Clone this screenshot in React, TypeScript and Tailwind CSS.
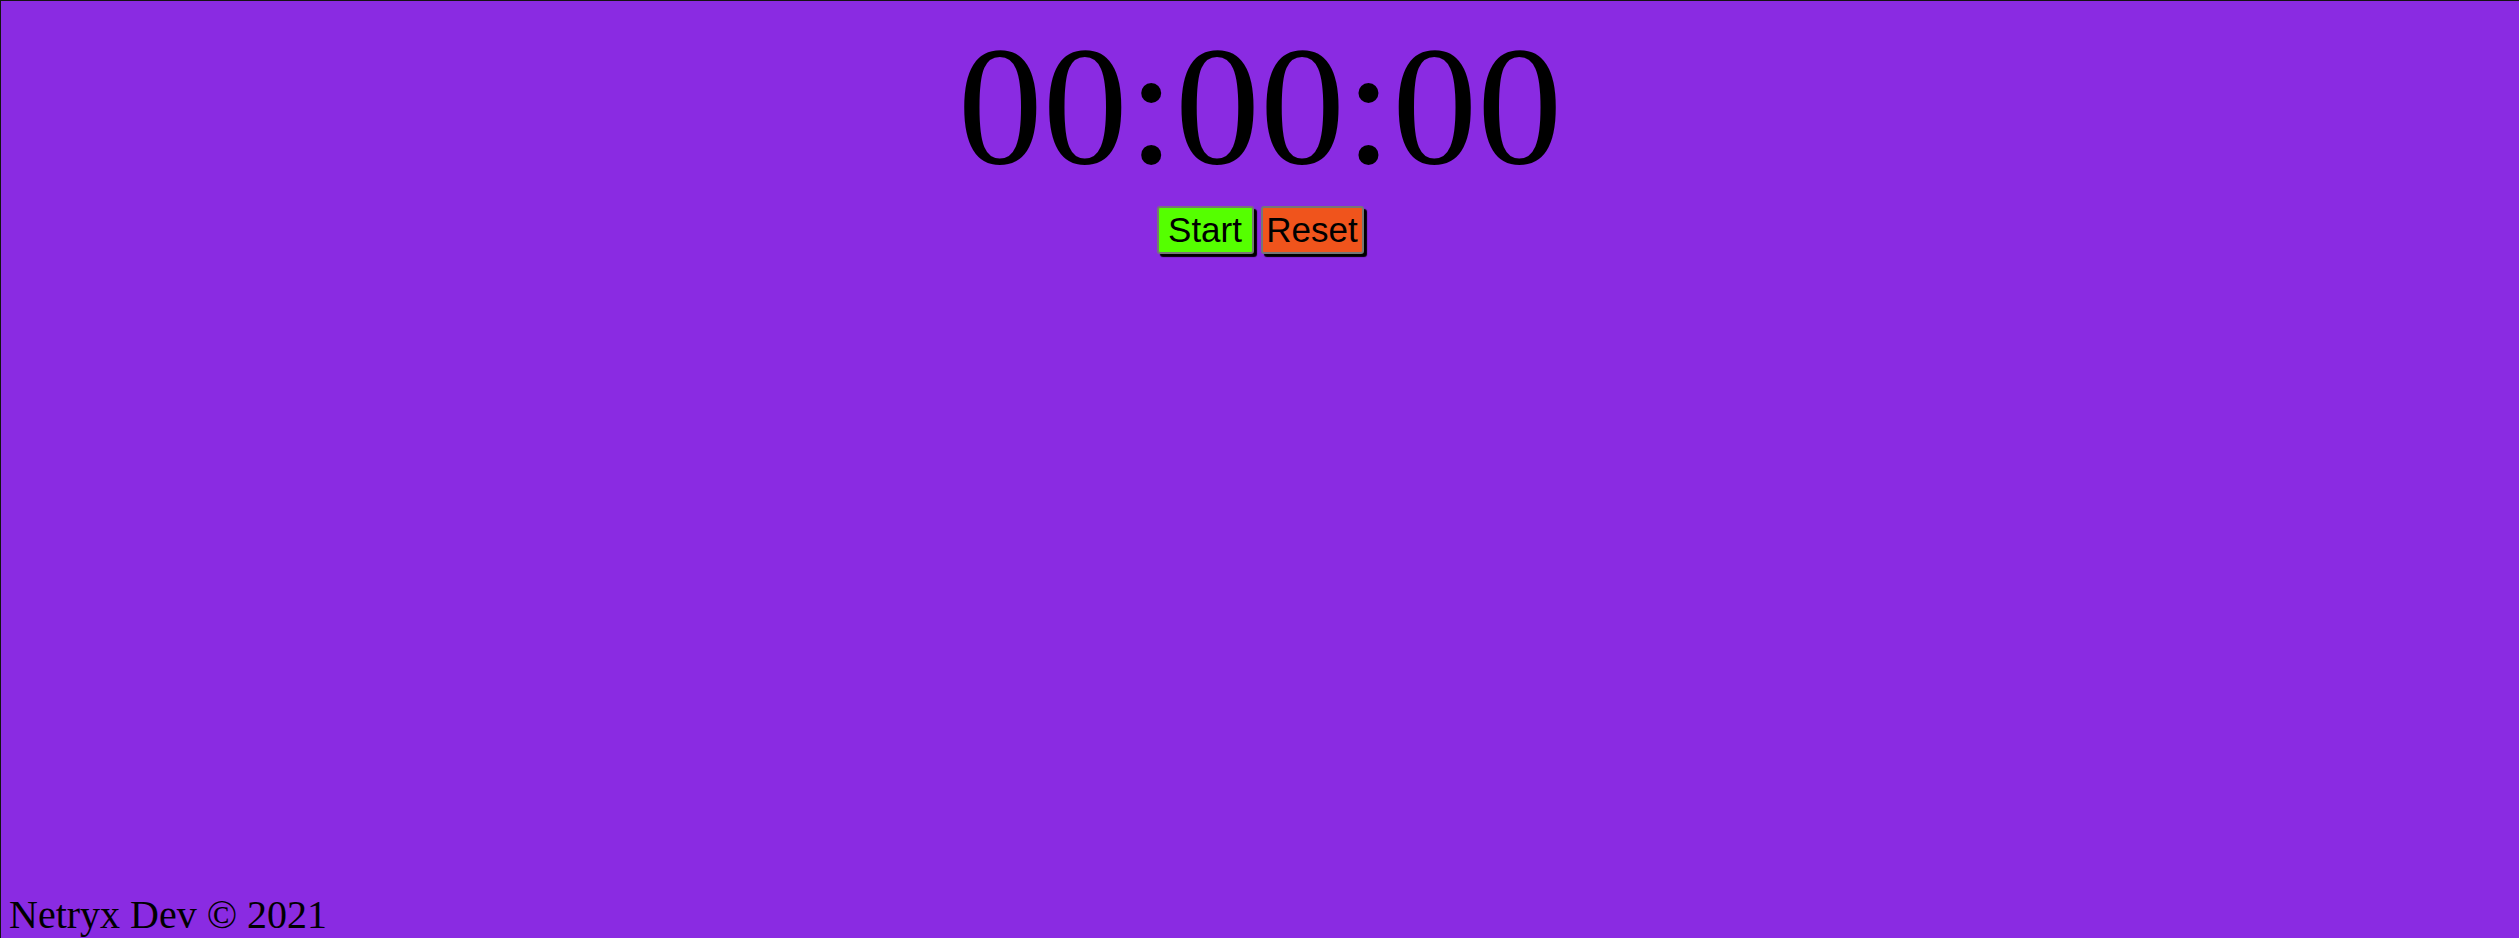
import React, { useState } from "react";

const App = () => {
    const [seconds, setSeconds] = useState(0);

    const hh = String(Math.floor(seconds / 3600)).padStart(2, "0");
    const mm = String(Math.floor((seconds % 3600) / 60)).padStart(2, "0");
    const ss = String(seconds % 60).padStart(2, "0");

    return (
        <div className="h-screen w-full flex flex-col overflow-hidden bg-[#8a2be2] border-t border-l border-[#141414] text-black">
            {/* TIMER */}
            <div className="flex flex-col items-center pt-[8px]">
                <h1
                    className="text-[170px] leading-[normal] font-normal"
                    style={{ fontFamily: '"Liberation Serif", "Times New Roman", serif' }}
                >
                    {hh}:{mm}:{ss}
                </h1>

                <div
                    className="flex gap-[7px] mt-[2px]"
                    style={{ fontFamily: '"Liberation Sans", Arial, sans-serif' }}
                >
                    <button
                        className="w-[97px] h-[48px] flex items-center justify-center text-[35px] leading-[normal] bg-[#55ff00] border-2 border-[#767676] rounded-[3px] shadow-[3px_3px_1px_#000]"
                        onClick={() => setSeconds((s) => s + 1)}
                    >
                        Start
                    </button>
                    <button
                        className="w-[103px] h-[48px] flex items-center justify-center text-[35px] leading-[normal] bg-[#f0541c] border-2 border-[#767676] rounded-[3px] shadow-[3px_3px_1px_#000]"
                        onClick={() => setSeconds(0)}
                    >
                        Reset
                    </button>
                </div>
            </div>

            {/* FOOTER */}
            <footer
                className="mt-auto pl-[8px] text-[40px] leading-[1.15]"
                style={{ fontFamily: '"Liberation Serif", "Times New Roman", serif' }}
            >
                Netryx Dev © 2021
            </footer>
        </div>
    );
};

export default App;
